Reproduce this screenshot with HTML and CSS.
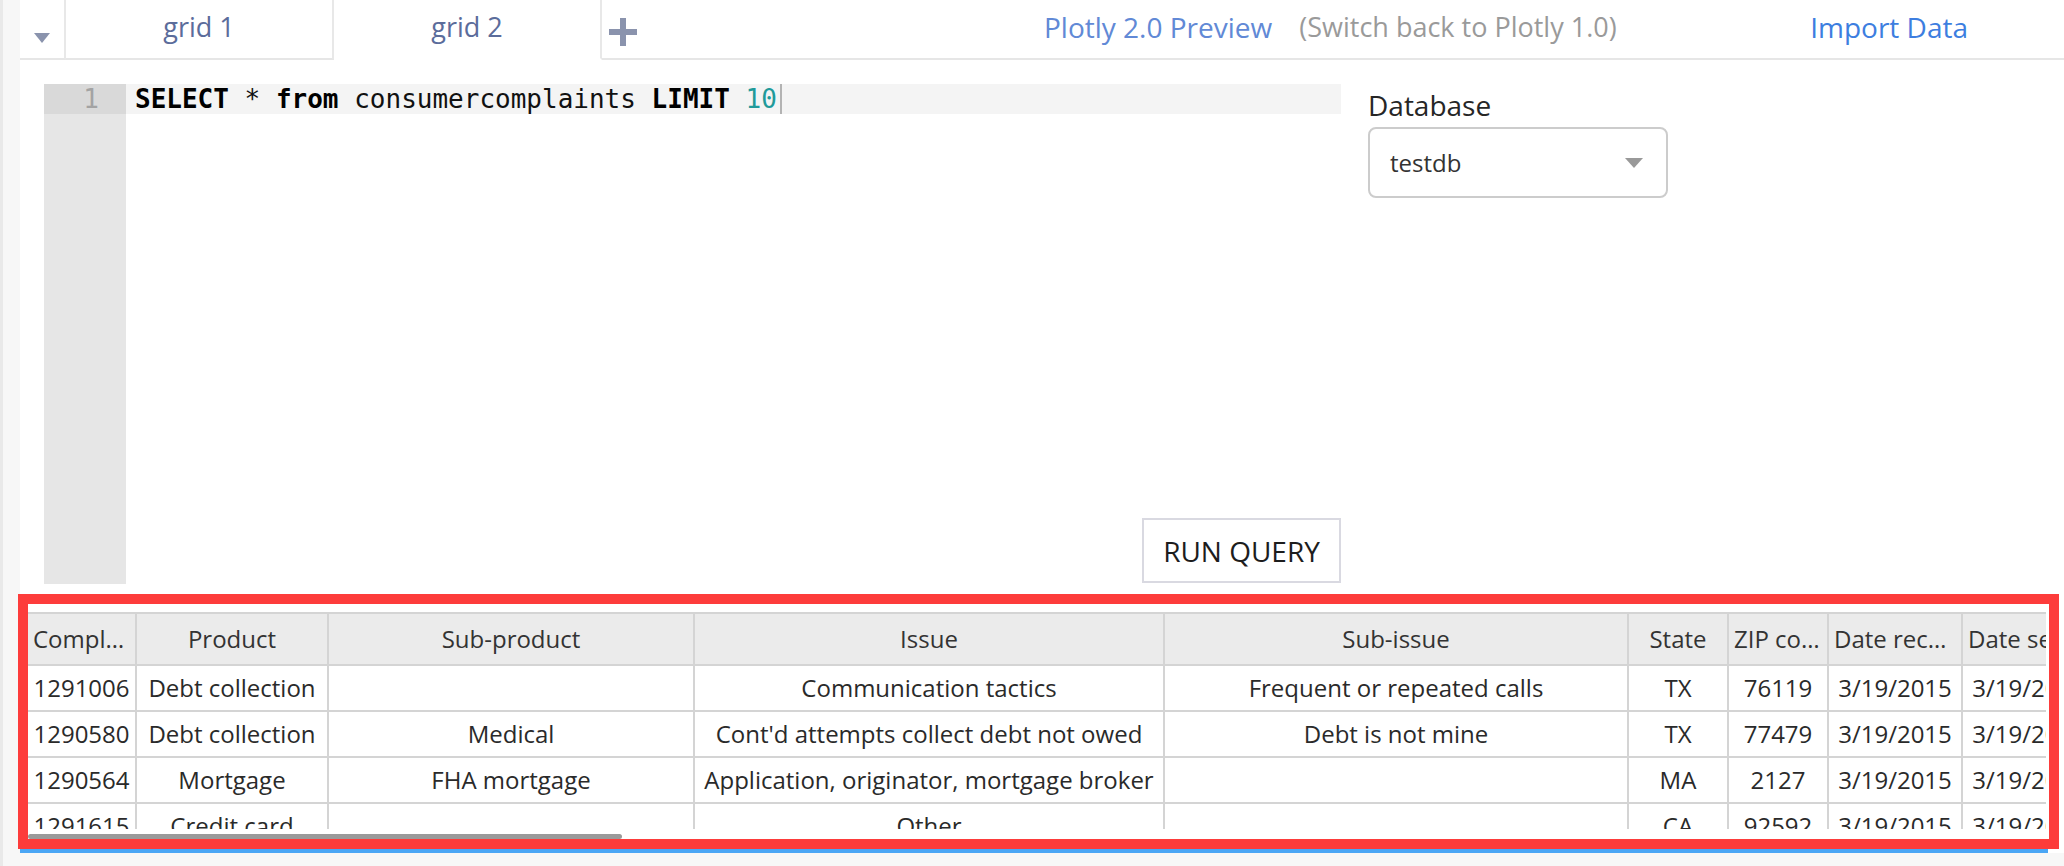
FILE: index.html
```html
<!DOCTYPE html>
<html lang="en">
<head>
<meta charset="utf-8">
<title>Plotly SQL Grid</title>
<link rel="stylesheet" href="styles.css">
</head>
<body>
<div class="panel">
  <nav class="tabbar">
    <div class="tab-menu">
      <svg class="menu-caret" width="16" height="10" viewBox="0 0 16 10"><polygon points="0,0 16,0 8,10" fill="#8a93ad"/></svg>
    </div>
    <div class="tab">grid 1</div>
    <div class="tab tab-active">grid 2</div>
    <div class="tab-add">
      <svg width="28" height="28" viewBox="0 0 28 28"><path d="M14 0 V28 M0 14 H28" stroke="#8a93ad" stroke-width="6" fill="none"/></svg>
    </div>
    <a class="link-preview">Plotly 2.0 Preview</a>
    <span class="link-switch">(Switch back to Plotly 1.0)</span>
    <a class="link-import">Import Data</a>
  </nav>

  <section class="workspace">
    <div class="editor">
      <div class="gutter">
        <div class="ln ln-active">1</div>
      </div>
      <div class="code-col">
        <div class="code-line"><span class="kw">SELECT</span> * <span class="kw">from</span> consumercomplaints <span class="kw">LIMIT</span> <span class="num">10</span><span class="cursor"></span></div>
        <button class="run-btn">RUN QUERY</button>
      </div>
    </div>
    <aside class="db">
      <div class="db-label">Database</div>
      <div class="db-select">
        <span>testdb</span>
        <svg width="18" height="10" viewBox="0 0 18 10"><polygon points="0,0 18,0 9,10" fill="#999"/></svg>
      </div>
    </aside>
  </section>

  <section class="results">
    <div class="viewport">
      <div class="grid">
        <div class="hc">Complaint ID</div>
        <div class="hc">Product</div>
        <div class="hc">Sub-product</div>
        <div class="hc">Issue</div>
        <div class="hc">Sub-issue</div>
        <div class="hc">State</div>
        <div class="hc">ZIP code</div>
        <div class="hc">Date received</div>
        <div class="hc">Date sent to company</div>

        <div class="c">1291006</div>
        <div class="c">Debt collection</div>
        <div class="c"></div>
        <div class="c">Communication tactics</div>
        <div class="c">Frequent or repeated calls</div>
        <div class="c">TX</div>
        <div class="c">76119</div>
        <div class="c">3/19/2015</div>
        <div class="c">3/19/2015</div>

        <div class="c">1290580</div>
        <div class="c">Debt collection</div>
        <div class="c">Medical</div>
        <div class="c">Cont'd attempts collect debt not owed</div>
        <div class="c">Debt is not mine</div>
        <div class="c">TX</div>
        <div class="c">77479</div>
        <div class="c">3/19/2015</div>
        <div class="c">3/19/2015</div>

        <div class="c">1290564</div>
        <div class="c">Mortgage</div>
        <div class="c">FHA mortgage</div>
        <div class="c">Application, originator, mortgage broker</div>
        <div class="c"></div>
        <div class="c">MA</div>
        <div class="c">2127</div>
        <div class="c">3/19/2015</div>
        <div class="c">3/19/2015</div>

        <div class="c">1291615</div>
        <div class="c">Credit card</div>
        <div class="c"></div>
        <div class="c">Other</div>
        <div class="c"></div>
        <div class="c">CA</div>
        <div class="c">92592</div>
        <div class="c">3/19/2015</div>
        <div class="c">3/19/2015</div>
      </div>
    </div>
    <div class="hscroll"><div class="thumb"></div></div>
  </section>
  <div class="progress"></div>
</div>
</body>
</html>
```

FILE: styles.css
```css
html, body {
  margin: 0;
  padding: 0;
}
body {
  width: 2064px;
  height: 866px;
  overflow: hidden;
  background: #f7f7f7;
  border-left: 3px solid #e9e9e9;
  box-sizing: border-box;
  font-family: "Open Sans", "Liberation Sans", sans-serif;
}
.panel {
  margin-left: 17px;
  height: 853px;
  background: #ffffff;
}

/* tab bar */
.tabbar {
  display: flex;
  height: 60px;
  align-items: stretch;
}
.tabbar > * {
  box-sizing: border-box;
  border-bottom: 2px solid #e6e6e6;
}
.tab-menu {
  width: 46px;
  border-right: 2px solid #e8e8e8;
  display: flex;
  justify-content: center;
  padding-top: 33px;
}
.menu-caret { display: block; }
.tab {
  width: 268px;
  border-right: 2px solid #e8e8e8;
  text-align: center;
  font-size: 27px;
  line-height: 54px;
  color: #5b6c9b;
}
.tab-active {
  border-bottom-color: transparent;
}
.tab-add {
  padding: 18px 0 0 7px;
}
.tab-add svg { display: block; }
.link-preview {
  padding-left: 407px;
  font-size: 28px;
  line-height: 54px;
  color: #6189d6;
  white-space: nowrap;
}
.link-switch {
  padding-left: 27px;
  font-size: 27px;
  line-height: 54px;
  color: #9a9a9a;
  white-space: nowrap;
}
.link-import {
  flex: 1;
  text-align: right;
  padding-right: 96px;
  font-size: 28px;
  line-height: 54px;
  color: #3d7ee0;
  white-space: nowrap;
}

/* workspace */
.workspace {
  display: flex;
  padding: 24px 0 0 24px;
  gap: 27px;
}
.editor {
  display: flex;
  width: 1297px;
  height: 500px;
  font-family: "DejaVu Sans Mono", "Liberation Mono", monospace;
  font-size: 26px;
}
.gutter {
  width: 82px;
  background: #e6e6e6;
}
.ln {
  height: 30px;
  line-height: 30px;
  text-align: right;
  padding-right: 27px;
  color: #a3a3a3;
}
.ln-active {
  background: #d9d9d9;
}
.code-col {
  flex: 1;
  display: flex;
  flex-direction: column;
}
.code-line {
  height: 30px;
  line-height: 30px;
  padding-left: 9px;
  background: #f4f4f4;
  color: #111;
  white-space: pre;
}
.kw { font-weight: bold; color: #000; }
.num { color: #219a9a; }
.cursor {
  display: inline-block;
  width: 2px;
  height: 30px;
  margin-left: 3px;
  vertical-align: top;
  background: #b3b3b3;
}
.run-btn {
  margin-top: auto;
  margin-bottom: 1px;
  align-self: flex-end;
  width: 199px;
  height: 65px;
  box-sizing: border-box;
  background: #fff;
  border: 2px solid #d9d9e1;
  font-family: "Open Sans", "Liberation Sans", sans-serif;
  font-size: 28px;
  color: #1d1d1d;
  padding: 0;
}

.db {
  padding-top: 2px;
}
.db-label {
  font-size: 28px;
  line-height: 38px;
  color: #262626;
}
.db-select {
  margin-top: 3px;
  width: 300px;
  height: 71px;
  box-sizing: border-box;
  border: 2px solid #cccccc;
  border-radius: 8px;
  display: flex;
  align-items: center;
  justify-content: space-between;
  padding: 0 23px 0 20px;
  font-size: 24px;
  color: #333;
}

/* results */
.results {
  margin-top: 10px;
  margin-left: -2px;
  width: 2041px;
  height: 255px;
  box-sizing: border-box;
  border: 10px solid #fd3c3b;
  padding-top: 8px;
}
.viewport {
  height: 217px;
  margin-right: 3px;
  overflow: hidden;
}
.grid {
  display: grid;
  grid-template-columns: 109px 192px 366px 470px 464px 100px 100px 134px 134px;
  grid-auto-rows: 46px;
  grid-template-rows: 54px;
  font-size: 24px;
  color: #2a2a2a;
}
.hc, .c {
  box-sizing: border-box;
  border-right: 2px solid #d4d4d4;
  border-bottom: 2px solid #d4d4d4;
  padding: 0 5px;
  text-align: center;
  white-space: nowrap;
  overflow: hidden;
  text-overflow: ellipsis;
}
.hc {
  background: #ebebeb;
  border-top: 2px solid #d4d4d4;
  line-height: 50px;
  color: #333;
}
.c {
  line-height: 44px;
}
.hscroll {
  height: 10px;
}
.thumb {
  margin-top: 5px;
  width: 594px;
  height: 5px;
  border-radius: 3px;
  background: #9a9a9a;
}
.progress {
  width: 2028px;
  height: 4px;
  background: #4aa6f5;
}
```
